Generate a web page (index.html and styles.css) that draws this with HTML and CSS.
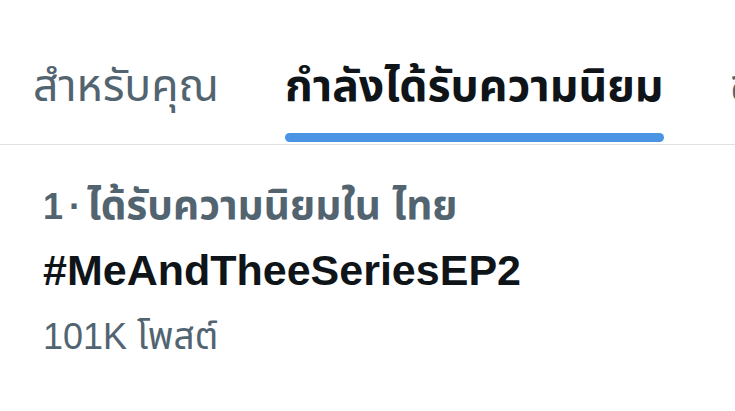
FILE: index.html
```html
<!DOCTYPE html>
<html lang="th">
<head>
<meta charset="utf-8">
<link rel="stylesheet" href="styles.css">
</head>
<body>
<nav class="tabs">
  <div class="tab"><span class="tab-label">สำหรับคุณ</span></div>
  <div class="tab active"><span class="tab-label">กำลังได้รับความนิยม</span><span class="indicator"></span></div>
  <div class="tab"><span class="tab-label">ข่าว</span></div>
</nav>
<section class="trend">
  <div class="meta">1<span class="sep"> · </span><span class="th">ได้รับความนิยมใน ไทย</span></div>
  <div class="name">#MeAndTheeSeriesEP2</div>
  <div class="count">101K <span class="th">โพสต์</span></div>
</section>
</body>
</html>
```
FILE: styles.css
```css
html, body {
  margin: 0;
  padding: 0;
  background: #ffffff;
}
body {
  width: 735px;
  height: 411px;
  overflow: hidden;
  font-family: "Liberation Sans", "Noto Sans Thai", "Loma", "Garuda", "Noto Sans", sans-serif;
}
.tabs {
  display: flex;
  height: 144px;
  border-bottom: 1px solid #dfe3e6;
  overflow: hidden;
}
.tab {
  display: flex;
  flex-direction: column;
  flex-shrink: 0;
  padding: 0 33px;
  padding-top: 56px;
  box-sizing: border-box;
}
.tab-label {
  font-size: 44.5px;
  line-height: 60px;
  color: #536471;
  white-space: nowrap;
}
.tab.active .tab-label {
  color: #0f1419;
  font-weight: 700;
}
.indicator {
  display: block;
  height: 9px;
  margin-top: 17px;
  border-radius: 5px;
  background: #4a94e3;
}
.trend {
  padding: 38px 43px 0;
}
.meta {
  font-size: 36px;
  line-height: 48px;
  font-weight: 700;
  color: #536471;
}
.meta .th {
  font-size: 40.5px;
  line-height: 1;
}
.sep {
  word-spacing: -4px;
}
.name {
  margin-top: 3px;
  font-size: 43px;
  line-height: 72px;
  font-weight: 700;
  color: #0f1419;
}
.count {
  margin-top: 2px;
  font-size: 36px;
  line-height: 58px;
  color: #536471;
}
.count .th {
  font-size: 37px;
  line-height: 1;
}
```
